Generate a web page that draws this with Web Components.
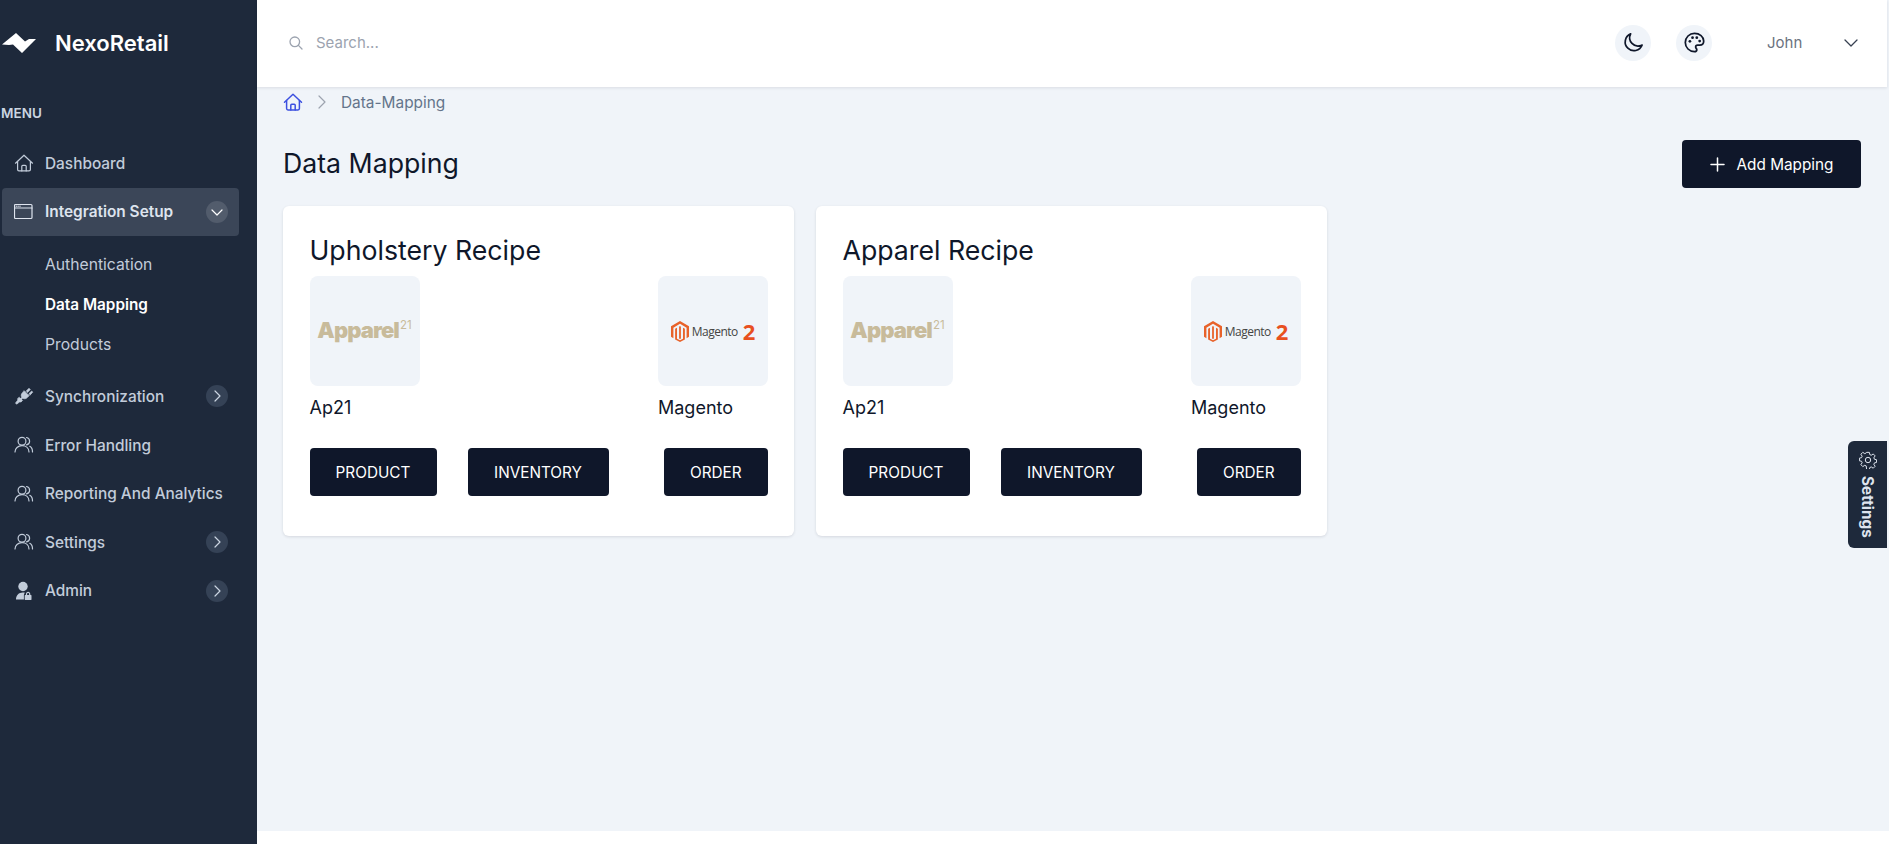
<!DOCTYPE html>
<html lang="en">
<head>
<meta charset="utf-8">
<title>Data Mapping</title>
<style>
  html, body { margin: 0; height: 100%; }
  body { font-family: Inter, "Liberation Sans", sans-serif; overflow: hidden; background: #fff; }
</style>
</head>
<body>
<app-shell>
  <side-bar slot="side">
    <nav-item label="Dashboard" icon="home"></nav-item>
    <nav-item label="Integration Setup" icon="window" chevron="down" active></nav-item>
    <sub-menu>
      <sub-item>Authentication</sub-item>
      <sub-item current>Data Mapping</sub-item>
      <sub-item>Products</sub-item>
    </sub-menu>
    <nav-item label="Synchronization" icon="plug" chevron="right"></nav-item>
    <nav-item label="Error Handling" icon="users"></nav-item>
    <nav-item label="Reporting And Analytics" icon="users"></nav-item>
    <nav-item label="Settings" icon="users" chevron="right"></nav-item>
    <nav-item label="Admin" icon="admin" chevron="right"></nav-item>
  </side-bar>
  <top-bar slot="top"></top-bar>
  <bread-crumb>Data-Mapping</bread-crumb>
  <page-head>Data Mapping</page-head>
  <card-grid>
    <recipe-card name="Upholstery Recipe"></recipe-card>
    <recipe-card name="Apparel Recipe"></recipe-card>
  </card-grid>
  <settings-tab slot="overlay"></settings-tab>
</app-shell>

<script>
const ICONS = {
  home: '<path d="M1.500 10.200 10 2.200l8.500 8"/><path d="M3.600 8.500v8c0 .8.600 1.400 1.400 1.400h10c.8 0 1.400-.6 1.400-1.400v-8"/><path d="M7.800 17.900v-4.600c0-.6.400-1 1-1h2.400c.6 0 1 .4 1 1v4.600"/>',
  window: '<rect x=".5" y="2.500" width="17.500" height="14" rx="1"/><path d="M.5 6H18"/><path d="M2.100 4.200h.6M3.900 4.200h.6M5.700 4.200h.6" stroke-width="1"/>',
  plug: '<g fill="currentColor" stroke="currentColor" stroke-width=".7"><path d="M10.300 4.900 15.100 9.700 13 11.800c-1.200 1.200-3 1.300-4.300.4l-2.400 2.400L5.400 13.700l2.400-2.400c-.9-1.300-.8-3.100.4-4.300z"/><path d="M12.200 5.100l2.800-2.800 1.300 1.300-2.800 2.800zM14.900 7.800l2.800-2.800 1 1.200-2.600 2.800z"/><path d="M5.600 11.400l3 3-1.500 1.500-1.600.1-2.900 2.200-1.100-1.100 2.200-2.900.1-1.600z"/></g>',
  users: '<circle cx="8" cy="6.200" r="3.900"/><path d="M1 17c0-3.800 3-6.300 7-6.300s7 2.500 7 6.300"/><path d="M12.500 2.500c1.900.4 3.100 1.900 3.100 3.700s-1.200 3.300-3.100 3.700"/><path d="M15.800 11.300c1.800.9 2.700 3 2.700 5.700"/>',
  admin: '<g fill="currentColor" stroke="none"><circle cx="9" cy="5.500" r="4.700"/><path d="M2 18.500c0-4.200 2.800-7 6.800-7 .8 0 1.600.1 2.200.3-.7.5-1.100 1.300-1.100 2.200v4.500z"/><path fill-rule="evenodd" d="M11.200 14h.7v-.9c0-1.300 1-2.300 2.200-2.300s2.200 1 2.200 2.300v.9h.7c.3 0 .5.2.5.5v4c0 .3-.2.5-.5.5h-5.800c-.3 0-.5-.2-.5-.5v-4c0-.3.2-.5.5-.5zm1.900 0h2v-.9c0-.6-.4-1.100-1-1.100s-1 .5-1 1.100z"/></g>',
};

const chevronPath = { down: "M5 8l5 5 5-5", right: "M8 5l5 5-5 5" };

function define(tag, css, html) {
  customElements.define(tag, class extends HTMLElement {
    connectedCallback() {
      if (this.shadowRoot) return;
      this.attachShadow({ mode: "open" });
      const markup = typeof html === "function" ? html(this) : html;
      this.shadowRoot.innerHTML = `<style>${css}</style>${markup}`;
    }
  });
}

define("app-shell", `
  :host { display: flex; width: 1889px; height: 844px; position: relative; overflow: hidden; background: #f0f4f9; }
  .column { flex: 1; display: flex; flex-direction: column; min-width: 0; }
  main { flex: 1; padding: 0 28px 0 26px; }
  footer { height: 13px; background: #fff; }
`, `
  <slot name="side"></slot>
  <div class="column">
    <slot name="top"></slot>
    <main><slot></slot></main>
    <footer></footer>
  </div>
  <slot name="overlay"></slot>
`);

define("side-bar", `
  :host { display: block; width: 257px; flex: none; background: #1e293b; box-sizing: border-box; }
  .brand { display: flex; align-items: center; height: 85px; padding: 0 0 2px 2px; gap: 19px; color: #fff; font-size: 22px; font-weight: 600; }
  .brand svg { display: block; }
  .menu { font-size: 13.500px; font-weight: 600; color: #cbd5e1; padding-left: 1px; line-height: 20px; margin: 16px 0 16px; }
  nav { padding: 0 18px 0 2px; }
`, `
  <div class="brand">
    <svg width="34" height="20" viewBox="0 0 34 20"><path fill="#fff" d="M0 11.500 14 0l9 8.500L27 6h7L20 20l-9-8.500-4 .5z"/></svg>
    <span>NexoRetail</span>
  </div>
  <div class="menu">MENU</div>
  <nav><slot></slot></nav>
`);

define("nav-item", `
  :host { display: flex; align-items: center; height: 48.600px; border-radius: 4px; padding: 0 11px 0 12px; color: #c2ccda; font-size: 15.400px; font-weight: 500; }
  :host([active]) { background: #3b4658; color: #dee4ee; font-weight: 600; }
  svg.ic { width: 20px; height: 20px; flex: none; margin-right: 11px; fill: none; stroke: currentColor; stroke-width: 1.200; stroke-linecap: round; stroke-linejoin: round; }
  span { flex: 1; white-space: nowrap; }
  .chev { width: 22px; height: 22px; border-radius: 50%; background: #354256; display: flex; align-items: center; justify-content: center; color: #cbd5e1; }
  :host([active]) .chev { background: #525c6c; color: #fff; }
  .chev svg { width: 20px; height: 20px; fill: none; stroke: currentColor; stroke-width: 1.200; stroke-linecap: round; stroke-linejoin: round; }
`, (el) => `
  <svg class="ic" viewBox="0 0 20 20">${ICONS[el.getAttribute("icon")]}</svg>
  <span>${el.getAttribute("label")}</span>
  ${el.hasAttribute("chevron") ? `<div class="chev"><svg viewBox="0 0 20 20"><path d="${chevronPath[el.getAttribute("chevron")]}"/></svg></div>` : ""}
`);

define("sub-menu", `:host { display: block; padding: 8px 0 8px 43px; }`, `<slot></slot>`);

define("sub-item", `
  :host { display: flex; align-items: center; height: 40px; font-size: 15.700px; font-weight: 400; color: #c2ccda; }
  :host([current]) { color: #fff; font-weight: 600; font-size: 15.300px; }
`, `<slot></slot>`);

define("top-bar", `
  :host { display: flex; align-items: center; height: 87px; background: #fff; box-shadow: 0 1px 3px rgba(16,24,40,.1); position: relative; padding: 0 26px 2px 32px; margin-right: 2px; box-sizing: border-box; color: #0f172a; }
  .search { display: flex; align-items: center; gap: 13px; flex: 1; font-size: 15px; color: #9ca3af; }
  .search svg { width: 14px; height: 14px; fill: none; stroke: currentColor; stroke-width: 1.300; stroke-linecap: round; }
  .round { width: 36px; height: 36px; border-radius: 50%; background: #f0f4f9; display: flex; align-items: center; justify-content: center; }
  .round svg { width: 23px; height: 23px; fill: none; stroke: #0f172a; stroke-width: 1.500; stroke-linecap: round; stroke-linejoin: round; }
  .round + .round { margin-left: 25px; }
  .john { font-size: 15px; color: #6b7280; margin-left: 55px; width: 74px; }
  .caret { width: 20px; height: 20px; fill: none; stroke: #374151; stroke-width: 1.300; stroke-linecap: round; stroke-linejoin: round; }
`, `
  <div class="search">
    <svg viewBox="0 0 14 14"><circle cx="5.800" cy="5.800" r="4.800"/><path d="M9.400 9.400 13 13"/></svg>
    <span>Search...</span>
  </div>
  <div class="round"><svg viewBox="0 0 20 20"><path d="M16.900 12.500A7.300 7.300 0 0 1 7.500 2.500 7.600 7.600 0 1 0 17.500 12.200z"/></svg></div>
  <div class="round"><svg viewBox="0 0 20 20"><path d="M10 2a8 8 0 0 0 0 16c1.300 0 2-.8 2-1.700 0-.5-.2-.8-.5-1.200-.3-.4-.5-.8-.5-1.200 0-1 .8-1.600 1.700-1.600H14.500c2 0 3.500-1.500 3.500-3.600C18 5 14.500 2 10 2z"/><g fill="#0f172a" stroke="none"><circle cx="6" cy="9" r="1.200"/><circle cx="8.300" cy="5.800" r="1.200"/><circle cx="12" cy="5.800" r="1.200"/><circle cx="14.500" cy="8.800" r="1.200"/></g></svg></div>
  <span class="john">John</span>
  <svg class="caret" viewBox="0 0 20 20"><path d="M4 7l6 6 6-6"/></svg>
`);

define("bread-crumb", `
  :host { display: flex; align-items: center; height: 30px; font-size: 15.400px; color: #64748b; }
  svg.h { width: 20px; height: 20px; fill: none; stroke: #3c50e0; stroke-width: 1.500; stroke-linecap: round; stroke-linejoin: round; }
  svg.c { width: 14px; height: 14px; margin: 0 12px 0 12px; fill: none; stroke: #9ca3af; stroke-width: 1.200; stroke-linecap: round; stroke-linejoin: round; }
`, `
  <svg class="h" viewBox="0 0 20 20">${ICONS.home}</svg>
  <svg class="c" viewBox="0 0 14 14"><path d="M4 1l6 6-6 6"/></svg>
  <span><slot></slot></span>
`);

define("page-head", `
  :host { display: flex; align-items: center; justify-content: space-between; margin: 23px 0 18px; height: 48px; }
  h2 { margin: -2px 0 0; font-size: 26.700px; font-weight: 400; color: #0f172a; }
  button { all: unset; display: flex; align-items: center; justify-content: center; gap: 12px; width: 179px; height: 48px; border-radius: 4px; background: #0f172a; color: #fff; font: 400 15.300px Inter, sans-serif; }
  svg { width: 15px; height: 15px; fill: none; stroke: #fff; stroke-width: 1.500; stroke-linecap: round; }
`, `
  <h2><slot></slot></h2>
  <button><svg viewBox="0 0 15 15"><path d="M7.500 1v13M1 7.500h13"/></svg>Add Mapping</button>
`);

define("card-grid", `:host { display: grid; grid-template-columns: repeat(3, 511px); gap: 22px; }`, `<slot></slot>`);

define("apparel-logo", `
  :host { display: flex; align-items: flex-start; color: #c8bb9b; font-family: Inter, sans-serif; font-weight: 900; font-size: 22px; letter-spacing: -.9px; line-height: 24px; margin-top: -3px; }
  sup { font-size: 11.500px; font-weight: 400; line-height: 14px; letter-spacing: 0; margin-left: 1px; }
`, `<span>Apparel</span><sup>21</sup>`);

define("magento-logo", `
  :host { display: flex; align-items: center; }
  svg { width: 18px; height: 21px; fill: #e8622a; margin-right: 3px; }
  .t { font: 400 12px "Open Sans", sans-serif; letter-spacing: -.5px; color: #444; width: 51px; }
  .n { font: 700 22px "Open Sans", sans-serif; color: #e8501f; }
`, `
  <svg viewBox="0 0 24 28"><path d="M12 0 24 7v14l-3.200 1.900V8.900L12 3.800 3.200 8.900v14L0 21V7z"/><path d="M5.500 10.300 8 8.900v14.600l4 2.200 4-2.200V8.900l2.500 1.400v14.400L12 28l-6.500-3.300z"/><path d="M10.800 7.500 12 6.800l1.200.7v15.800L12 24l-1.200-.7z"/></svg>
  <span class="t">Magento</span><span class="n">2</span>
`);

define("recipe-card", `
  :host { display: block; height: 330px; box-sizing: border-box; background: #fff; border-radius: 6px; box-shadow: 0 1px 3px rgba(16,24,40,.12); padding: 27px 26px 27px 26.500px; color: #0f172a; }
  h3 { margin: -1px 0 8px; font-size: 26.700px; font-weight: 400; line-height: 36px; }
  .row { display: flex; justify-content: space-between; }
  .sys { width: 110px; }
  .logo { width: 110px; height: 110px; background: #f0f4f9; border-radius: 8px; display: flex; align-items: center; justify-content: center; }
  .name { font-size: 18px; height: 42px; line-height: 44px; }
  .actions { display: flex; gap: 31px; margin-top: 20px; }
  button { all: unset; display: flex; align-items: center; justify-content: center; height: 48px; border-radius: 4px; background: #0f172a; color: #fff; font: 400 15.300px Inter, sans-serif; }
  .p { width: 127px; } .i { width: 141px; } .o { width: 104.500px; margin-left: auto; }
`, (el) => `
  <h3>${el.getAttribute("name")}</h3>
  <div class="row">
    <div class="sys"><div class="logo"><apparel-logo></apparel-logo></div><div class="name">Ap21</div></div>
    <div class="sys"><div class="logo"><magento-logo></magento-logo></div><div class="name">Magento</div></div>
  </div>
  <div class="actions">
    <button class="p">PRODUCT</button><button class="i">INVENTORY</button><button class="o">ORDER</button>
  </div>
`);

define("settings-tab", `
  :host { position: absolute; left: 1848px; top: 441px; width: 39px; height: 107px; background: #1e293b; border-radius: 6px 0 0 6px; color: #dee4ee; display: flex; flex-direction: column; align-items: center; padding-top: 10px; box-sizing: border-box; gap: 7px; }
  svg { width: 18px; height: 18px; fill: none; stroke: currentColor; stroke-width: 1.100; stroke-linejoin: round; }
  span { writing-mode: vertical-rl; font-size: 15.300px; font-weight: 700; }
`, `
  <svg viewBox="0 0 20 20"><circle cx="10" cy="10" r="3"/><path d="M8.500 1.500h3l.5 2.500 1.600.7 2.200-1.400 2.100 2.100-1.400 2.200.7 1.600 2.300.5v3l-2.300.5-.7 1.600 1.400 2.200-2.100 2.100-2.200-1.400-1.600.7-.5 2.300h-3L8 16.600l-1.600-.7-2.200 1.400-2.100-2.100 1.400-2.200-.7-1.600-2.300-.5v-3L2.800 7.400l.7-1.600-1.400-2.200 2.100-2.100 2.200 1.400L8 2.200z"/></svg>
  <span>Settings</span>
`);
</script>
</body>
</html>
